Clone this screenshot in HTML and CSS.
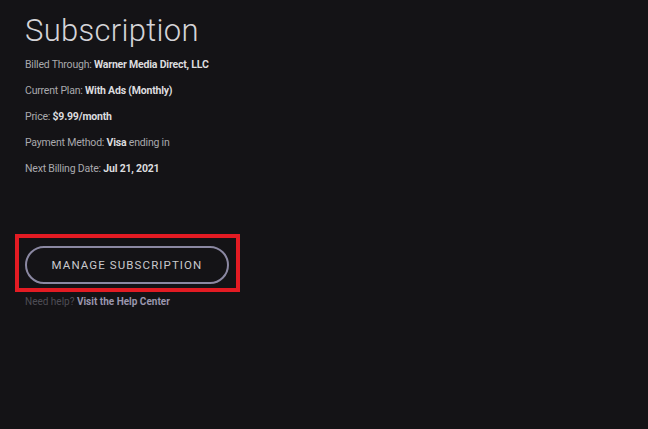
FILE: index.html
```html
<!DOCTYPE html>
<html>
<head>
<meta charset="utf-8">
<link rel="stylesheet" href="styles.css">
</head>
<body>
<main class="page">
  <h1 class="title">Subscription</h1>
  <ul class="details">
    <li>Billed Through: <b>Warner Media Direct, LLC</b></li>
    <li>Current Plan: <b>With Ads (Monthly)</b></li>
    <li>Price: <b>$9.99/month</b></li>
    <li>Payment Method: <b>Visa</b> ending in</li>
    <li>Next Billing Date: <b>Jul 21, 2021</b></li>
  </ul>
  <div class="highlight">
    <button class="manage">MANAGE SUBSCRIPTION</button>
  </div>
  <p class="help">Need help? <b>Visit the Help Center</b></p>
</main>
</body>
</html>
```

FILE: styles.css
```css
html, body {
  margin: 0;
  padding: 0;
  background: #141316;
  height: 100%;
}
body {
  font-family: Roboto, "Liberation Sans", sans-serif;
  color: #b4b4b8;
}
.page {
  padding: 12px 0 0 25px;
}
.title {
  margin: 0;
  font-weight: 300;
  font-size: 31px;
  line-height: 38px;
  color: #d4d4d8;
  letter-spacing: 0.3px;
}
.details {
  list-style: none;
  margin: 2px 0 0 0;
  padding: 0;
}
.details li {
  font-size: 10.5px;
  line-height: 26px;
  color: #a9a9ad;
  letter-spacing: -0.2px;
}
.details b {
  color: #dcdcdf;
  font-weight: 700;
}
.highlight {
  margin: 52px 0 0 -10px;
  width: 225px;
  height: 58px;
  border: 4px solid #e31b23;
  padding: 8px 0 0 6px;
  box-sizing: border-box;
}
.manage {
  display: block;
  width: 204px;
  height: 38px;
  border: 2px solid #8b88a2;
  border-radius: 19px;
  background: transparent;
  color: #c9c9cd;
  font-family: Roboto, "Liberation Sans", sans-serif;
  font-size: 11.5px;
  font-weight: 400;
  letter-spacing: 1.1px;
  padding: 0;
  box-sizing: border-box;
}
.help {
  margin: 4px 0 0 0;
  font-size: 10px;
  line-height: 12px;
  color: #4e4d55;
}
.help b {
  color: #9a96ad;
}
```
